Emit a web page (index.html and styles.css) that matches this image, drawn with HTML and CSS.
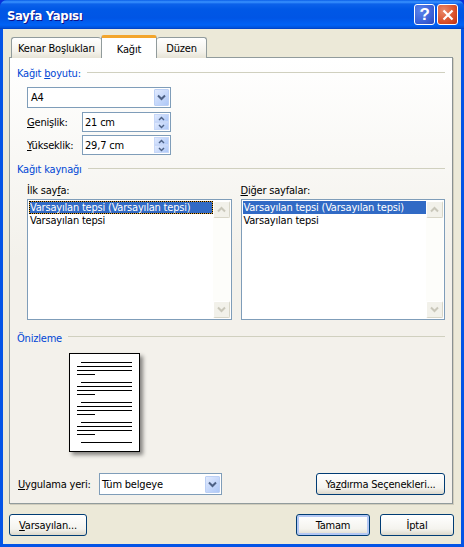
FILE: index.html
```html
<!DOCTYPE html>
<html lang="tr">
<head>
<meta charset="utf-8">
<title>Sayfa Yapısı</title>
<link rel="stylesheet" href="styles.css">
</head>
<body>
<svg class="defs" width="0" height="0">
  <symbol id="down" viewBox="0 0 9 7"><path d="M1 1.5l3.5 3.5L8 1.5" fill="none" stroke="currentColor" stroke-width="2"/></symbol>
  <symbol id="up" viewBox="0 0 9 7"><path d="M1 5.5L4.5 2 8 5.5" fill="none" stroke="currentColor" stroke-width="2"/></symbol>
</svg>
<div class="window">
  <header class="titlebar">
    <span class="title">Sayfa Yapısı</span>
    <span class="cap cap-help">?</span>
    <span class="cap cap-close"><svg width="12" height="12" viewBox="0 0 12 12"><path d="M1.5 1.5l9 9M10.5 1.5l-9 9" stroke="#fff" stroke-width="2.2"/></svg></span>
  </header>
  <main class="client">
    <nav class="tabs">
      <span class="tab tab-first">Kenar Boşlukları</span>
      <span class="tab tab-active">Kağıt</span>
      <span class="tab tab-last">Düzen</span>
    </nav>
    <section class="panel">
      <div class="group-head first"><span>Kağıt <u>b</u>oyutu:</span><i></i></div>
      <div class="field combo combo-size"><span>A4</span><b class="drop"><svg width="9" height="7"><use href="#down"/></svg></b></div>
      <div class="row row-w"><label><u>G</u>enişlik:</label>
        <div class="field spin"><span>21 cm</span><b class="spinbtns"><em><svg width="7" height="5"><use href="#up"/></svg></em><em><svg width="7" height="5"><use href="#down"/></svg></em></b></div>
      </div>
      <div class="row row-h"><label><u>Y</u>ükseklik:</label>
        <div class="field spin"><span>29,7 cm</span><b class="spinbtns"><em><svg width="7" height="5"><use href="#up"/></svg></em><em><svg width="7" height="5"><use href="#down"/></svg></em></b></div>
      </div>
      <div class="group-head source"><span>Kağıt kaynağı</span><i></i></div>
      <div class="lists">
        <div class="listcol">
          <label>İlk say<u>f</u>a:</label>
          <div class="listbox">
            <ul>
              <li class="sel focus">Varsayılan tepsi (Varsayılan tepsi)</li>
              <li>Varsayılan tepsi</li>
            </ul>
            <div class="sb"><b class="sb-btn"><svg width="9" height="7"><use href="#up"/></svg></b><b class="sb-btn"><svg width="9" height="7"><use href="#down"/></svg></b></div>
          </div>
        </div>
        <div class="listcol">
          <label><u>D</u>iğer sayfalar:</label>
          <div class="listbox">
            <ul>
              <li class="sel">Varsayılan tepsi (Varsayılan tepsi)</li>
              <li>Varsayılan tepsi</li>
            </ul>
            <div class="sb"><b class="sb-btn"><svg width="9" height="7"><use href="#up"/></svg></b><b class="sb-btn"><svg width="9" height="7"><use href="#down"/></svg></b></div>
          </div>
        </div>
      </div>
      <div class="group-head preview-head"><span>Önizleme</span><i></i></div>
      <div class="page">
        <div class="para"><s class="ind"></s><s></s><s></s><s class="short"></s></div>
        <div class="para"><s class="ind"></s><s></s><s></s><s class="short"></s></div>
        <div class="para"><s class="ind"></s><s></s><s></s><s class="short"></s></div>
        <div class="para"><s class="ind"></s><s></s><s></s><s class="short"></s></div>
        <div class="para"><s class="ind"></s></div>
      </div>
      <div class="apply">
        <label><u>U</u>ygulama yeri:</label>
        <div class="field combo combo-apply"><span>Tüm belgeye</span><b class="drop"><svg width="9" height="7"><use href="#down"/></svg></b></div>
        <button class="btn btn-print">Ya<u>z</u>dırma Seçenekleri...</button>
      </div>
    </section>
    <footer class="footer">
      <button class="btn btn-default"><u>V</u>arsayılan...</button>
      <button class="btn btn-ok">Tamam</button>
      <button class="btn btn-cancel">İptal</button>
    </footer>
  </main>
</div>
</body>
</html>
```
FILE: styles.css
```css
* { box-sizing: border-box; }
html, body { margin: 0; padding: 0; }
body {
  width: 464px; height: 547px; overflow: hidden; background: #0831d9;
  font: 11px "DejaVu Sans Condensed", "DejaVu Sans", sans-serif; color: #000;
  letter-spacing: -0.2px;
}
.defs { position: absolute; }
u { text-decoration-skip-ink: none; }
label { display: block; white-space: nowrap; }

.window {
  width: 464px; height: 547px; display: flex; flex-direction: column;
  border-radius: 7px 7px 0 0; overflow: hidden; background: #0454e6;
}
.titlebar {
  height: 29px; flex: none; display: flex; align-items: center; padding: 0 6px 0 7px;
  background: linear-gradient(#0a5ee8 0, #3a93ff 2px, #0c62ea 4px, #0058e6 9px, #0055e5 18px, #0062f6 25px, #0050d8 28px, #003bbd 29px);
}
.title {
  flex: 1; color: #fff; font: bold 13px "DejaVu Sans Condensed", "DejaVu Sans", sans-serif;
  letter-spacing: -0.3px; text-shadow: 1px 1px 0 #0f1089; padding-top: 2px;
}
.cap {
  width: 21px; height: 21px; border: 1px solid #fff; border-radius: 3px;
  display: flex; align-items: center; justify-content: center;
}
.cap-help {
  margin-right: 2px; color: #fff; font: bold 17px "Liberation Sans", sans-serif;
  background: radial-gradient(circle at 30% 30%, #5b83ea, #3c62d8 60%, #2a46b8);
}
.cap-close { background: radial-gradient(circle at 30% 30%, #ea8a6a, #d9512a 60%, #c03010); }

.client {
  flex: 1; margin: 0 3px 3px; padding: 7px 7px 0 6px; background: #ece9d8;
  display: flex; flex-direction: column;
}

.tabs { height: 21px; display: flex; padding-left: 2px; position: relative; z-index: 1; }
.tab {
  height: 21px; margin-top: 1px; text-align: center; line-height: 22px;
  border: 1px solid #919b9c; border-bottom: 0; border-radius: 3px 3px 0 0;
  background: linear-gradient(#fff, #f3f1ea 70%, #e6e3d6);
}
.tab-first { width: 90px; border-right: 0; }
.tab-last { width: 50px; border-left: 0; }
.tab-active {
  width: 56px; height: 23px; margin-top: -1px; padding-top: 2px; background: #fff; line-height: 19px;
  border-top: 3px solid #f3a52c; border-color: #f3a52c #919b9c transparent; border-radius: 3px 3px 0 0;
}

.panel {
  width: 444px; height: 447px; flex: none; padding: 0 7px; border: 1px solid #919b9c; border-right-color: #8a9192;
  background: linear-gradient(#fff, #f3f1eb 45%);
  box-shadow: 1px 1px 0 #d0cdbd;
}
.group-head { display: flex; align-items: center; color: #0046d5; height: 13px; }
.group-head i { flex: 1; height: 1px; margin-left: 6px; margin-top: -2px; background: #d0d0bf; }
.first { margin-top: 9px; }
.source { margin-top: 8px; }
.preview-head { margin-top: 11px; }
.preview-head span { padding-top: 2px; }

.field {
  display: flex; align-items: center; background: #fff; border: 1px solid #7f9db9; padding: 1px;
}
.field > span { flex: 1; padding-left: 1px; }
.combo-size > span { padding-left: 2px; }
.combo-size { width: 144px; height: 21px; margin: 7px 0 4px 10px; }
.row { display: flex; align-items: center; margin-left: 10px; height: 20px; margin-bottom: 3px; }
.row label { width: 55px; }
.spin { width: 89px; height: 20px; }
.drop {
  width: 15px; height: 17px; border: 1px solid #bcd0f5; border-radius: 1px; color: #4d6185;
  background: linear-gradient(135deg, #e1eafe, #aec8f7); display: flex; align-items: center; justify-content: center;
}
.spinbtns { width: 15px; height: 16px; display: flex; flex-direction: column; }
.spinbtns em {
  flex: 1; display: flex; align-items: center; justify-content: center; color: #4d6185;
  background: linear-gradient(135deg, #e1eafe, #aec8f7); border: 1px solid #c8d8f8;
}

.lists { display: flex; gap: 9px; margin: 8px 0 0 10px; }
.listcol { width: 205px; }
.listcol label { height: 15px; line-height: 14px; }
.listbox { height: 121px; display: flex; border: 1px solid #7f9db9; background: #fff; padding: 1px; }
.listbox ul { flex: 1; margin: 0; padding: 0; list-style: none; }
.listbox li { height: 13px; line-height: 14px; padding-left: 1px; white-space: nowrap; }
.sel { background: #316ac5; color: #fff; }
.focus { outline: 1px dotted #000; outline-offset: -1px; box-shadow: inset 0 0 0 1px #e0a030; }
.sb { width: 17px; display: flex; flex-direction: column; justify-content: space-between; background: #fdfdfa; }
.sb-btn {
  height: 17px; display: flex; align-items: center; justify-content: center; color: #c9c7ba;
  background: #f2f1ea; border: 1px solid #fff; border-right-color: #d8d6c8; border-bottom-color: #d8d6c8; border-radius: 2px;
}

.page {
  width: 71px; height: 99px; margin: 9px 0 21px 52px; padding: 8px 7px 0; background: #fff; border: 1px solid #000;
  box-shadow: 3px 3px 4px rgba(0,0,0,.45);
}
.para { margin-bottom: 7px; }
.para s { display: block; height: 1px; background: #000; margin-bottom: 3px; }
.para s.ind { margin-left: 4px; }
.para s.short { width: 18px; }

.apply { display: flex; align-items: center; height: 22px; }
.apply label { width: 82px; padding-left: 1px; }
.combo-apply { width: 123px; height: 22px; }
.btn {
  height: 22px; padding: 0; font: inherit; letter-spacing: inherit; color: #000; border: 1px solid #003c74; border-radius: 3px;
  background: linear-gradient(#fff, #f4f3ee 70%, #dcd8cb);
}
.btn-print { width: 129px; margin-left: 94px; }

.footer { display: flex; margin-top: 10px; margin-left: 0; }
.btn-default { width: 78px; }
.btn-ok { width: 74px; margin-left: 209px; box-shadow: inset 0 0 0 2px #b4c8f4; }
.btn-cancel { width: 74px; margin-left: 10px; }
```
